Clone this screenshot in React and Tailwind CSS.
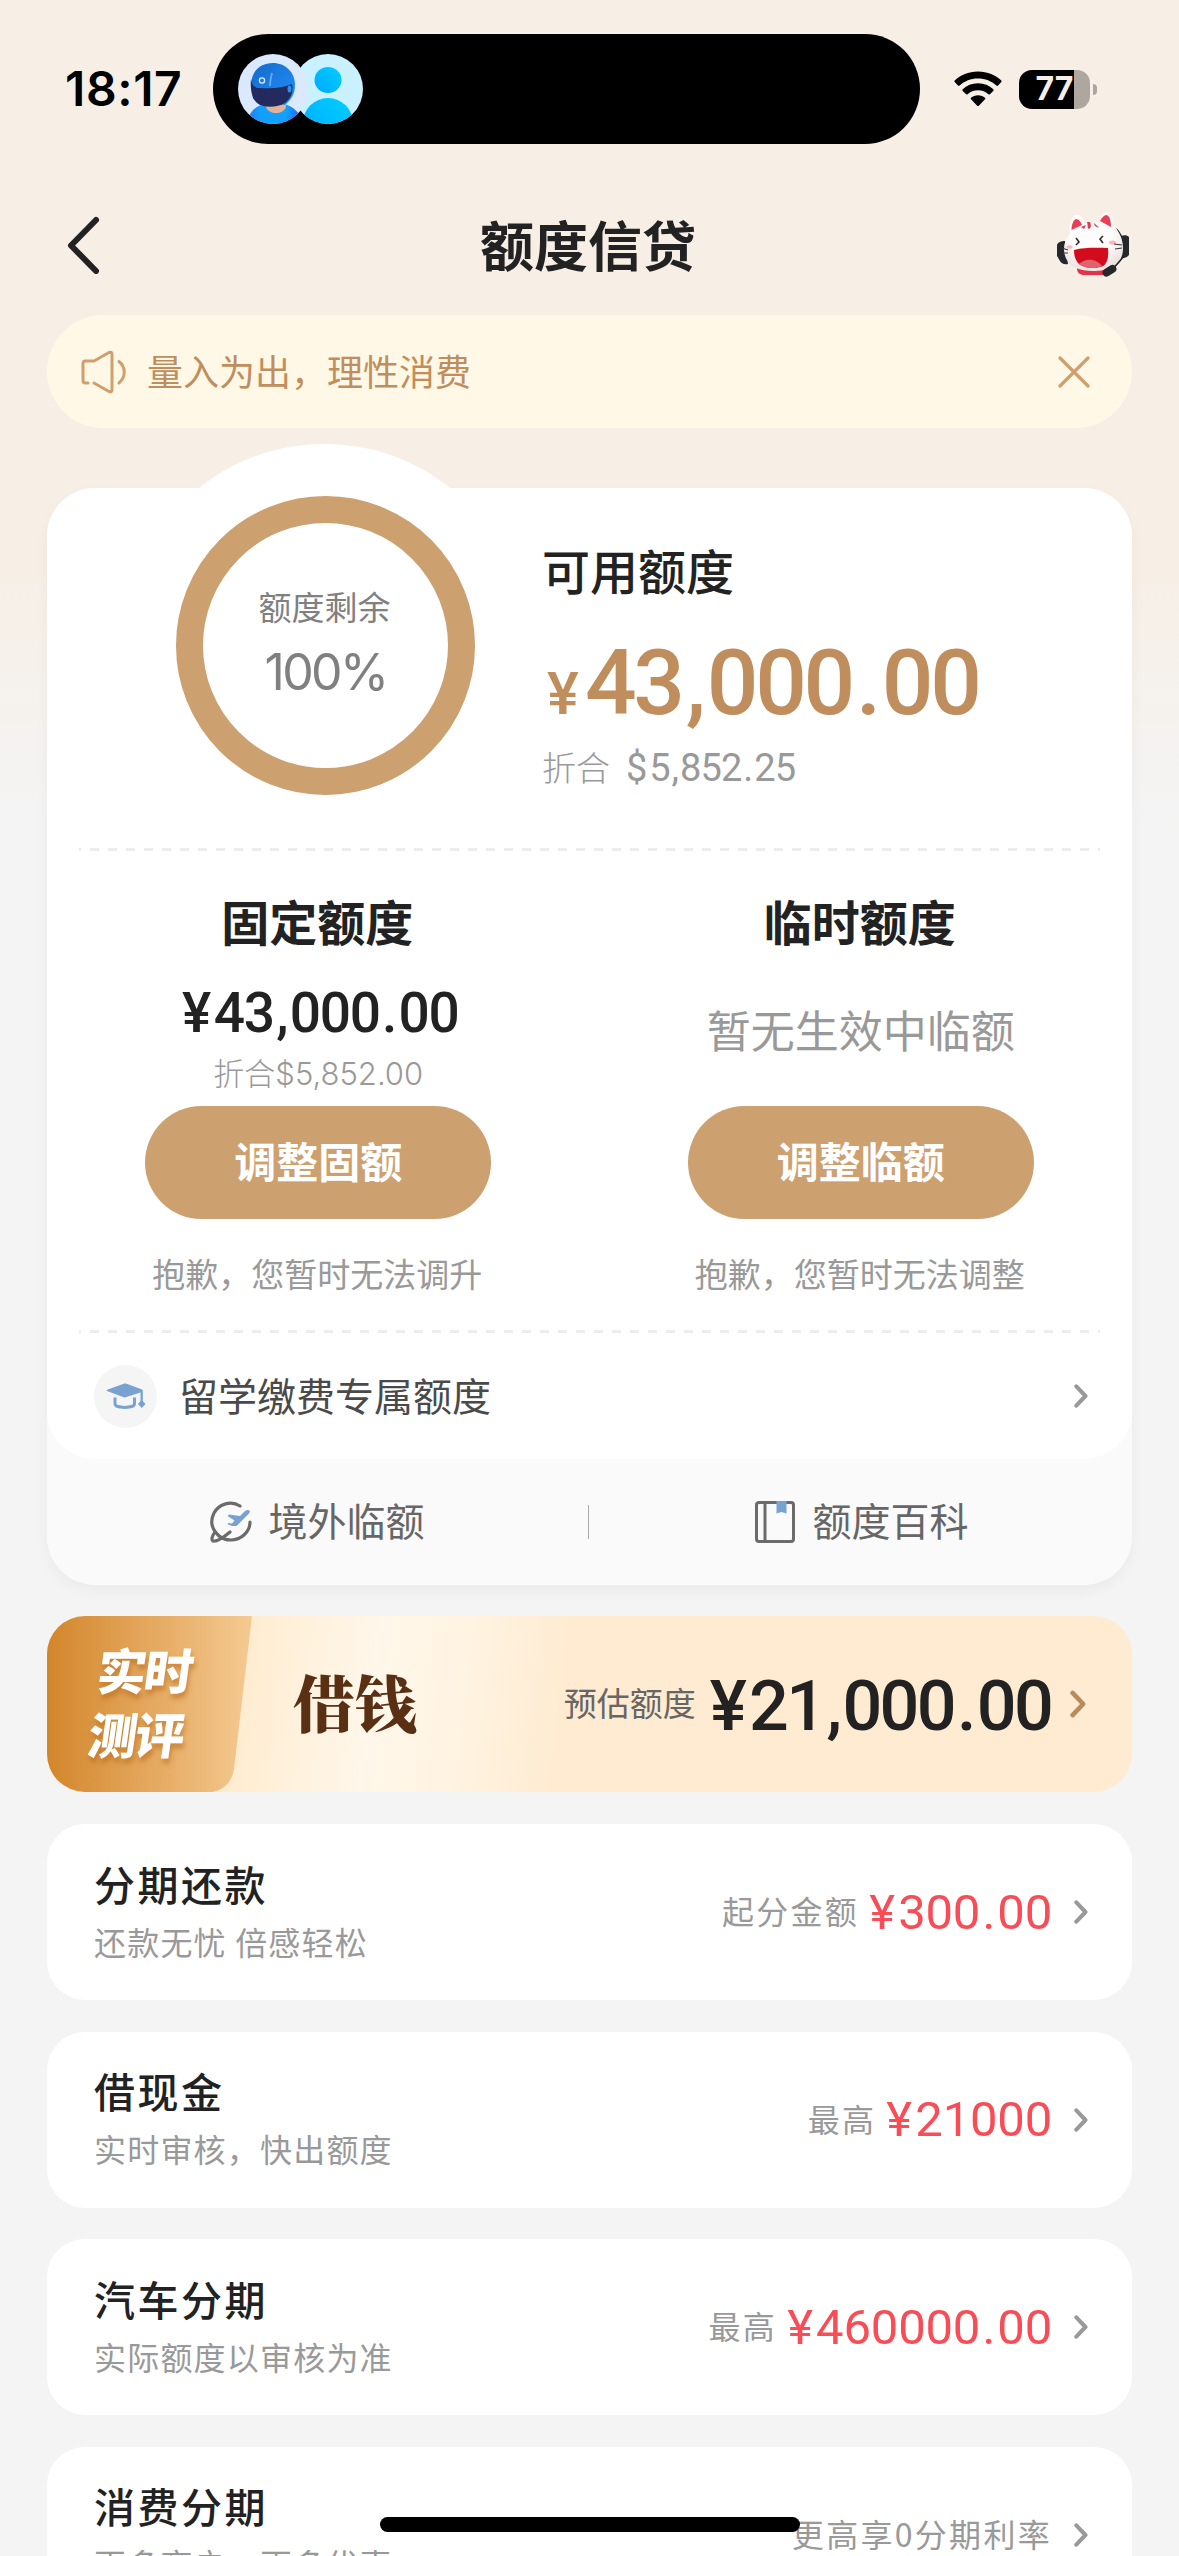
import clsx from 'clsx';

const services = [
  { title: '分期还款', desc: '还款无忧 倍感轻松', label: '起分金额', amount: '¥300.00' },
  { title: '借现金', desc: '实时审核，快出额度', label: '最高', amount: '¥21000' },
  { title: '汽车分期', desc: '实际额度以审核为准', label: '最高', amount: '¥460000.00' },
  { title: '消费分期', desc: '更多商户，更多优惠', label: '更高享0分期利率' },
];

function Chevron({ className }) {
  return (
    <svg viewBox="0 0 14 24" fill="none" className={clsx('h-6 w-3.5 shrink-0', className)}>
      <path d="M2.3 2.3 11.5 12 2.3 21.7" stroke="currentColor" strokeWidth="4" strokeLinecap="round" strokeLinejoin="round" />
    </svg>
  );
}

// Currency sign and separators get more room than the font gives them
function Money({ value, className }) {
  return (
    <span className={clsx('font-[Roboto,sans-serif] leading-none whitespace-nowrap', className)}>
      {value.split('').map((ch, i) => (
        <span key={i} className={clsx(',.'.includes(ch) && 'px-[0.045em]', '¥$'.includes(ch) && 'mr-[0.07em]')}>{ch}</span>
      ))}
    </span>
  );
}

function DashedLine() {
  return (
    <div className="mx-8 h-[3px] bg-[linear-gradient(90deg,#ededed_0_2px,transparent_2px_11px,#ededed_11px_18px)] bg-[length:18px_3px]" />
  );
}

function Avatars() {
  return (
    <svg viewBox="0 0 126 70" className="h-[70px] w-[126px]">
      <defs>
        <clipPath id="avatarLeft"><circle cx="35" cy="35" r="35" /></clipPath>
        <clipPath id="avatarRight"><circle cx="90" cy="35" r="35" /></clipPath>
        <linearGradient id="helmet" x1="0" y1="0" x2="1" y2="1">
          <stop offset="0" stopColor="#1668c8" />
          <stop offset="1" stopColor="#1f93ff" />
        </linearGradient>
        <linearGradient id="person" x1="1" y1="0" x2="0" y2="1">
          <stop offset="0" stopColor="#00d0ff" />
          <stop offset="1" stopColor="#00a8ff" />
        </linearGradient>
        <linearGradient id="shirt" x1="0" y1="0" x2="1" y2="0">
          <stop offset="0" stopColor="#1e7bf5" />
          <stop offset="0.25" stopColor="#12a0fb" />
          <stop offset="0.7" stopColor="#12a0fb" />
          <stop offset="1" stopColor="#1f5ff5" />
        </linearGradient>
      </defs>
      <g clipPath="url(#avatarRight)">
        <rect x="55" width="71" height="70" fill="#c9f1ff" />
        <ellipse cx="90" cy="26" rx="13.5" ry="13" fill="url(#person)" />
        <ellipse cx="90" cy="69" rx="25" ry="25" fill="url(#person)" />
      </g>
      <g clipPath="url(#avatarLeft)">
        <rect width="70" height="70" fill="#dbe9ff" />
        <path d="M9 70c2-14 10-19 20-20h17c9 2 17 9 19 20z" fill="url(#shirt)" />
        <path d="M28 48h20v5c-3 8-17 8-20 0z" fill="#e3b399" />
        <path d="M13 30C14 16 23 9 35 9s22 9 22 22c0 9-4 15-10 20l-32-6z" fill="url(#helmet)" />
        <path d="M13 25c1 6 3 9 9 9 12 1 22 0 32-4 2 9-2 15-7 19-8 5-22 5-28 0-5-4-7-14-6-24z" fill="#222a5e" />
        <ellipse cx="51.500" cy="35" rx="2" ry="3.500" fill="#2f8df5" />
        <circle cx="24" cy="26.500" r="2.600" fill="none" stroke="#d7ecff" strokeWidth="1.300" />
        <path d="M34 19c-1 4-2 8-2 13" stroke="#62aefb" strokeWidth="1.800" fill="none" />
      </g>
    </svg>
  );
}

function StatusBar() {
  return (
    <div className="flex h-[178px] items-start pt-[34px]">
      <div className="flex h-[110px] w-[213px] items-center pl-[65px]">
        <span className="font-[Inter,sans-serif] text-[48px] leading-none font-semibold tracking-[0.6px] text-black">18:17</span>
      </div>
      <div className="flex h-[110px] w-[707px] items-center rounded-full bg-black pl-[25px]">
        <Avatars />
      </div>
      <div className="flex h-[110px] items-center pl-[34px]">
        <svg viewBox="0 0 48 36" className="h-9 w-12">
          <path d="M24 0.500C33.600 0.500 41.500 4 47.300 9.500c.5.500.5 1.100 0 1.600l-3.300 3.400c-.5.500-1.100.5-1.600 0C37.600 10 31.200 7.400 24 7.400S10.400 10 5.600 14.500c-.5.500-1.100.5-1.600 0L.7 11.100c-.5-.5-.5-1.100 0-1.600C6.500 4 14.400.5 24 .5z" />
          <path d="M24 12.300c6 0 11.300 2.200 15.300 6 .5.500.5 1.100 0 1.600l-3.400 3.300c-.5.500-1 .5-1.500 0-2.800-2.500-6.400-4-10.400-4s-7.600 1.500-10.400 4c-.5.500-1 .5-1.500 0l-3.400-3.300c-.5-.5-.5-1.100 0-1.600 4-3.800 9.300-6 15.300-6z" />
          <path d="M24 24.200c2.700 0 5.100.9 7 2.500.5.500.5 1 0 1.500l-6.200 6.500c-.5.500-1.100.5-1.600 0L17 28.200c-.5-.5-.5-1 0-1.500 1.900-1.600 4.300-2.500 7-2.500z" />
        </svg>
        <div className="ml-[17px] flex h-[39px] w-[71px] items-center justify-center rounded-[13px] bg-[linear-gradient(90deg,#000_0_55px,#aea79f_55px)]">
          <span className="font-[Inter,sans-serif] text-[32px] leading-none font-bold text-[#f7efe6]">77</span>
        </div>
        <div className="ml-[3px] h-[11px] w-1 rounded-r-full bg-[#aea79f]" />
      </div>
    </div>
  );
}

function CatService() {
  return (
    <svg viewBox="0 0 72 65" className="h-[65px] w-[72px]">
      <defs>
        <radialGradient id="catFace" cx="0.45" cy="0.35" r="0.7">
          <stop offset="0.5" stopColor="#fffdfc" />
          <stop offset="1" stopColor="#eadfdc" />
        </radialGradient>
      </defs>
      <path d="M59 17c4 4 6 8 7 14" stroke="#26262a" strokeWidth="2" fill="none" />
      <path d="M0 33c1-3 4-4 8-4l3 23c-4 1-7-1-8-3L0 44z" fill="#26272b" />
      <path d="M72 25c-2-2-5-2-8-1l-1 22c4 1 7-1 9-3z" fill="#26272b" />
      <path d="M20 56h34c0 5-3 7-6 7H27c-4 0-7-2-7-7z" fill="#e63248" />
      <path d="M13 22C12 12 14 4 19 3c4-1 7 4 9 9 5-2 9-2 14-1 1-5 4-11 8-11 5 0 7 8 8 15 5 6 8 13 8 21 0 17-13 23-30 23S7 52 7 37c0-6 2-11 6-15z" fill="url(#catFace)" />
      <path d="M14.500 18c0-6 2-10 4.500-11 2.500 0 5 3 6 6z" fill="#e93e55" />
      <path d="M43 9c2-3.500 4-6 6.500-6 3 .5 4.500 6 4.500 12z" fill="#e93e55" />
      <path d="M24 15l5-2-2 4zM30 10c1 3 0 6 2 7 2-1 2.500-4 1-7zM37 11c0 3 3 4.500 5 4.500z" fill="#e2394c" />
      <path d="M17 38c12-3 23-2 34-2 1 10-1 18-8 19-7 2-16 1-21-3-4-4-5-9-5-14z" fill="#d30c1d" />
      <path d="M22 52c6-6 17-6 23 2-7 3-17 3-23-2z" fill="#e0626c" />
      <path d="M19 26l3 4-3 3M46 24l-3 3 3 4" stroke="#33292b" strokeWidth="1.600" fill="none" />
      <ellipse cx="12.500" cy="35" rx="3" ry="1.800" fill="#f8b9bd" />
      <ellipse cx="55.500" cy="30.500" rx="3.500" ry="2" fill="#f8b9bd" />
      <path d="M5 36l6 2M6 41h5M57 32l8 1M58 37l7-1" stroke="#3c3335" strokeWidth="1.100" />
      <path d="M66 45c-3 4-6 8-11 12" stroke="#26272b" strokeWidth="1.600" fill="none" />
      <rect x="45" y="55" width="15" height="8" rx="4" transform="rotate(-32 52 59)" fill="#26272b" />
    </svg>
  );
}

function NavBar() {
  return (
    <div className="flex h-[137px] items-center justify-between pr-[50px] pb-1 pl-[67px]">
      <div className="w-[52px]">
        <svg viewBox="0 0 34 58" fill="none" className="h-[58px] w-[34px]">
          <path d="M29 4 4 29.500 29 55" stroke="#222" strokeWidth="6" strokeLinecap="round" strokeLinejoin="round" />
        </svg>
      </div>
      <h1 className="pb-0.5 text-[54px] leading-none font-bold text-[#222]">额度信贷</h1>
      <CatService />
    </div>
  );
}

function Notice() {
  return (
    <div className="mx-[47px] flex h-[113px] items-center rounded-full bg-[#fff8e7] pr-[42px] pl-[34px]">
      <svg viewBox="0 0 46 44" fill="none" className="h-11 w-[46px]" stroke="#cfa06c" strokeWidth="3" strokeLinecap="round" strokeLinejoin="round">
        <path d="M7 33H4.500Q2 33 2 30.500V13.500Q2 11 4.500 11H13L28 2.500Q31 1.500 31 4V40Q31 42.500 28 41.500L13 33" />
        <path d="M38 11.500C45 17 45 27 38 33" />
      </svg>
      <span className="ml-5 pb-1 text-[36px] leading-none text-[#c08e5d]">量入为出，理性消费</span>
      <svg viewBox="0 0 32 32" className="ml-auto h-8 w-8" stroke="#cfa06c" strokeWidth="3.200" strokeLinecap="round">
        <path d="M2 2 30 30M30 2 2 30" />
      </svg>
    </div>
  );
}

function Available() {
  return (
    <div className="flex h-[360px] pl-[129px]">
      <div className="mt-2 flex h-[299px] w-[299px] flex-col items-center rounded-full border-[27px] border-[#cda06f] pt-[67px]">
        <span className="pr-0.5 text-[33px] leading-none text-[#808080]">额度剩余</span>
        <span className="mt-6 font-[Inter,sans-serif] text-[50px] leading-none tracking-[-2.600px] text-[#808080]">100%</span>
      </div>
      <div className="ml-[67px] flex flex-col">
        <h2 className="mt-[57px] text-[48px] leading-none font-medium text-[#222]">可用额度</h2>
        <div className="mt-[45px] flex items-baseline text-[#c08e5d]">
          <Money value="¥" className="ml-[5px] w-[38px] text-[60px] font-medium" />
          <Money value="43,000.00" className="text-[91px] font-medium tracking-[-3.400px]" />
        </div>
        <div className="mt-5 flex items-center text-[#999]">
          <span className="pb-0.5 text-[34px] leading-none font-light">折合</span>
          <Money value="$5,852.25" className="ml-4 text-[38px] tracking-[-0.800px]" />
        </div>
      </div>
    </div>
  );
}

function QuotaColumn({ title, action, hint, children }) {
  return (
    <div className="flex flex-1 flex-col items-center">
      <h2 className="mt-[45px] pr-0.5 text-[48px] leading-none font-bold text-[#222]">{title}</h2>
      <div className="flex h-[162px] flex-col items-center">{children}</div>
      <button className="h-[113px] w-[346px] rounded-full bg-[#cda06f] pb-1.5 text-[42px] leading-none font-bold text-white">{action}</button>
      <p className="mt-[38px] pr-0.5 text-[33px] leading-none text-[#999]">{hint}</p>
    </div>
  );
}

function QuotaCard() {
  return (
    <section className="relative mx-[47px] mt-[60px] h-[1097px] rounded-[48px] bg-[#fafafa] shadow-[0_6px_14px_rgba(0,0,0,0.04)]">
      <div className="absolute -top-[44px] left-[76px] h-[403px] w-[403px] rounded-full bg-white" />
      <div className="relative h-[971px] rounded-[48px] bg-white">
        <Available />
        <DashedLine />
        <div className="flex h-[479px]">
          <QuotaColumn title="固定额度" action="调整固额" hint="抱歉，您暂时无法调升">
            <Money value="¥43,000.00" className="mt-[42px] pl-1 text-[55px] font-medium tracking-[-1.300px] text-[#222]" />
            <span className="mt-[17px] font-[Inter,'Noto_Sans_CJK_SC',sans-serif] text-[31px] leading-none font-light text-[#999]">折合$5,852.00</span>
          </QuotaColumn>
          <QuotaColumn title="临时额度" action="调整临额" hint="抱歉，您暂时无法调整">
            <span className="mt-[63px] text-[44px] leading-none text-[#999]">暂无生效中临额</span>
          </QuotaColumn>
        </div>
        <DashedLine />
        <div className="flex h-[126px] items-center pr-11 pl-[47px]">
          <div className="flex h-[63px] w-[63px] items-center justify-center rounded-full bg-[#f5f5f5]">
            <svg viewBox="0 0 40 26" className="h-[26px] w-10" fill="#7aa2d0">
              <path d="M18.500.6 1 6.800q-1 .6 0 1.300l16 6q1.700.6 3.400 0L36 9V8Q37.500 7 36 6.400L20 .6q-.8-.3-1.500 0z" />
              <path d="M9 14.500V21c0 4.500 19.500 4.500 19.500 0v-6.500" fill="none" stroke="#7aa2d0" strokeWidth="3" />
              <path d="M34.500 7.500h2.300V18l2.700 3-3.800 4-3.700-4 2.500-3z" />
            </svg>
          </div>
          <span className="ml-[22px] pb-[3px] text-[39px] leading-none text-[#4a4a4a]">留学缴费专属额度</span>
          <Chevron className="ml-auto text-[#999]" />
        </div>
      </div>
      <div className="flex h-[126px] items-center text-[39px] leading-none text-[#666]">
        <div className="flex flex-1 items-center justify-center gap-4">
          <svg viewBox="0 0 42 42" className="h-[42px] w-[42px]" fill="none" stroke="#6b6b6b" strokeWidth="3.200" strokeLinecap="round">
            <path d="M30 5C21-1 9 3 4 12c-4 8-2 16 4 22 3 3 8 5 13 5 10 0 19-8 19-18" />
            <path d="M5 31c-3 4-4 8-2 9 4 1 11-4 17-9" />
            <path d="M39.500 9.500c-1.500-1-3.500-.5-5 1L30 15l-11-1.500-1.500 1.500 7 4.500-2.500 3-4-.5-.5 1.300 4.500 1.700h4.500L39 12.500q1.500-1.800.5-3z" fill="#7aa2d0" stroke="none" />
          </svg>
          <span className="pb-[5px]">境外临额</span>
        </div>
        <div className="h-[34px] w-px bg-[#aaa]" />
        <div className="flex flex-1 items-center justify-center gap-4 pl-0.5">
          <svg viewBox="0 0 42 42" className="h-[42px] w-[42px]" fill="none" stroke="#6b6b6b" strokeWidth="3">
            <rect x="2.500" y="1.500" width="37" height="39" rx="2.500" />
            <path d="M11 1.500v39" />
            <path d="M22.500 0h10v12.500l-5-1.500-5 1.500z" fill="#7aa2d0" stroke="none" />
          </svg>
          <span className="pb-[5px]">额度百科</span>
        </div>
      </div>
    </section>
  );
}

function LoanBanner() {
  return (
    <section className="relative mx-[47px] mt-[31px] flex h-[176px] items-center overflow-hidden rounded-[38px] bg-[linear-gradient(97deg,#ffecd0_18%,#fff7ea_30%,#fff5e5_36%,#feebd1_48%)] pr-[46px]">
      <svg viewBox="0 0 205 176" className="absolute top-0 left-0 h-[176px] w-[205px]">
        <defs>
          <linearGradient id="loanTag">
            <stop offset="0" stopColor="#d3862b" />
            <stop offset="1" stopColor="#f5ca92" />
          </linearGradient>
        </defs>
        <path d="M0 0H205L187 153Q184 172 166 176H0z" fill="url(#loanTag)" />
      </svg>
      <div className="relative w-[205px] -skew-x-8 pb-1.5 pl-[46px] text-[49px] leading-[64px] font-black tracking-[-2px] text-white [text-shadow:2px_5px_5px_rgba(180,100,20,0.55)]">
        <div>实时</div>
        <div>测评</div>
      </div>
      <span className="ml-[41px] pb-1 font-['Noto_Serif_CJK_SC','Noto_Sans_CJK_SC',serif] text-[62px] leading-none font-black text-[#5a3014]">借钱</span>
      <span className="ml-auto pb-[3px] text-[33px] leading-none text-[#666]">预估额度</span>
      <Money value="¥21,000.00" className="ml-3.5 pt-1 text-[70px] font-medium tracking-[-2.700px] text-[#222]" />
      <Chevron className="ml-[19px] h-7 w-4 text-[#b98a5c]" />
    </section>
  );
}

function ServiceCard({ title, desc, label, amount }) {
  return (
    <section className="flex h-[176px] shrink-0 items-center rounded-[38px] bg-white pr-11 pl-[47px]">
      <div className="flex flex-col gap-[21px] pb-[5px]">
        <h3 className="text-[41px] leading-none font-medium tracking-[2.5px] text-[#222]">{title}</h3>
        <p className="text-[32px] leading-none tracking-[1.2px] text-[#999]">{desc}</p>
      </div>
      <span className="ml-auto pb-1 text-[32px] leading-none tracking-[2.300px] text-[#999]">{label}</span>
      {amount && <Money value={amount} className="ml-2.5 text-[49px] tracking-[-0.200px] text-[#f84c57]" />}
      <Chevron className="ml-[22px] text-[#999]" />
    </section>
  );
}

export default function App() {
  return (
    <div className="relative h-[2556px] w-[1179px] overflow-hidden bg-[linear-gradient(180deg,#f7efe6_0px,#f7efe6_570px,#f4f4f4_820px)] bg-[#f4f4f4] font-['Noto_Sans_CJK_SC',sans-serif]">
      <StatusBar />
      <NavBar />
      <Notice />
      <QuotaCard />
      <LoanBanner />
      <div className="mx-[47px] mt-8 flex flex-col gap-[31.500px]">
        {services.map((item) => (
          <ServiceCard key={item.title} {...item} />
        ))}
      </div>
      <div className="absolute bottom-6 left-[380px] h-[15px] w-[420px] rounded-full bg-black" />
    </div>
  );
}
